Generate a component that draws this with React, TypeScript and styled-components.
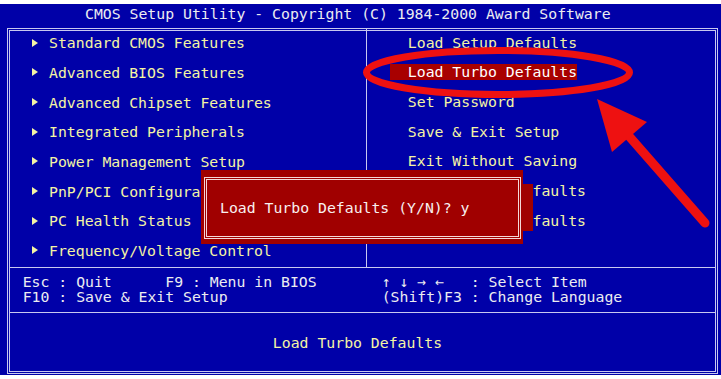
import styled, { createGlobalStyle } from 'styled-components';

const BIOS_BLUE = '#0000a8';
const LINE = '#c8c8f0';
const YELLOW = '#f4f4a4';
const WHITE = '#ececf0';
const DIALOG_RED = '#a00000';
const MARK_RED = '#ee1111';

const GlobalStyle = createGlobalStyle`
    html, body {
        margin: 0;
        padding: 0;
        background: #ffffff;
    }
    body {
        width: 721px;
        height: 379px;
        overflow: hidden;
    }
`;

const Page = styled.div`
    position: relative;
    width: 721px;
    height: 379px;
    box-sizing: border-box;
    padding-top: 4px;
    font-family: "DejaVu Sans Mono", "Liberation Mono", monospace;
    font-size: 14.8px;
`;

const Screen = styled.div`
    height: 371px;
    background: ${BIOS_BLUE};
    display: flex;
    flex-direction: column;
`;

const TitleBar = styled.div`
    height: 24px;
    line-height: 19px;
    padding-left: 85px;
    color: ${WHITE};
    white-space: pre;
`;

const Panel = styled.div`
    margin-left: 7px;
    width: 711px;
    height: 346px;
    box-sizing: border-box;
    border: 3px double ${LINE};
    display: flex;
    flex-direction: column;
`;

const MenuArea = styled.div`
    height: 236px;
    display: grid;
    grid-template-columns: 357px 1fr;
`;

const MenuColumn = styled.div<{ $divider?: boolean }>`
    display: grid;
    grid-auto-rows: 29.67px;
    align-content: start;
    margin-top: -3px;
    border-right: ${({ $divider }) => ($divider ? `1px solid ${LINE}` : 'none')};
`;

const LeftItem = styled.div`
    display: flex;
    align-items: center;
    gap: 11px;
    padding-left: 22px;
    color: ${YELLOW};
    white-space: pre;
`;

const Pointer = styled.span`
    width: 0;
    height: 0;
    border-left: 6px solid ${YELLOW};
    border-top: 4px solid transparent;
    border-bottom: 4px solid transparent;
`;

const RightItem = styled.div`
    display: flex;
    align-items: center;
    padding-left: 23px;
    white-space: pre;
`;

const ItemLabel = styled.span<{ $active?: boolean }>`
    display: inline-block;
    line-height: 16px;
    padding-left: 2ch;
    color: ${({ $active }) => ($active ? '#ffffff' : YELLOW)};
    background: ${({ $active }) => ($active ? '#a80000' : 'transparent')};
`;

const HelpArea = styled.div`
    height: 44px;
    border-top: 1px solid ${LINE};
    display: grid;
    grid-template-columns: 359px 1fr;
    align-content: center;
    padding-left: 12.7px;
    line-height: 14.3px;
    color: ${WHITE};
    white-space: pre;
`;

const HelpColumn = styled.div`
    display: flex;
    flex-direction: column;
    margin-top: -1px;
`;

const StatusArea = styled.div`
    flex: 1;
    border-top: 1px solid ${LINE};
    display: flex;
    align-items: center;
    justify-content: center;
    padding-right: 10px;
    color: ${YELLOW};
    white-space: pre;
`;

const Dialog = styled.div`
    position: absolute;
    left: 201px;
    top: 170px;
    width: 322px;
    height: 74px;
    box-sizing: border-box;
    padding: 7px 2px 5px 3px;
    background: ${DIALOG_RED};
`;

const DialogFrame = styled.div`
    height: 100%;
    box-sizing: border-box;
    border: 3px double #f4d8d8;
    display: flex;
    align-items: center;
    padding-left: 13px;
    padding-bottom: 1px;
    line-height: 17px;
    color: #f8f0f0;
    white-space: pre;
`;

const DialogShadow = styled.div`
    position: absolute;
    left: 523px;
    top: 184px;
    width: 10px;
    height: 47px;
    background: ${DIALOG_RED};
`;

const Marks = styled.svg`
    position: absolute;
    left: 0;
    top: 0;
    pointer-events: none;
`;

const leftItems = [
    'Standard CMOS Features',
    'Advanced BIOS Features',
    'Advanced Chipset Features',
    'Integrated Peripherals',
    'Power Management Setup',
    'PnP/PCI Configurations',
    'PC Health Status',
    'Frequency/Voltage Control',
];

const rightItems = [
    'Load Setup Defaults',
    'Load Turbo Defaults',
    'Set Password',
    'Save & Exit Setup',
    'Exit Without Saving',
    'Load Custom Defaults',
    'Save Custom Defaults',
];

const App = () => {
    return (
        <Page>
            <GlobalStyle />
            <Screen>
                <TitleBar>CMOS Setup Utility - Copyright (C) 1984-2000 Award Software</TitleBar>
                <Panel>
                    <MenuArea>
                        <MenuColumn $divider>
                            {leftItems.map((item) => (
                                <LeftItem key={item}>
                                    <Pointer />
                                    {item}
                                </LeftItem>
                            ))}
                        </MenuColumn>
                        <MenuColumn>
                            {rightItems.map((item, i) => (
                                <RightItem key={item}>
                                    <ItemLabel $active={i === 1}>{item}</ItemLabel>
                                </RightItem>
                            ))}
                        </MenuColumn>
                    </MenuArea>
                    <HelpArea>
                        <HelpColumn>
                            <span>Esc : Quit      F9 : Menu in BIOS</span>
                            <span>F10 : Save &amp; Exit Setup</span>
                        </HelpColumn>
                        <HelpColumn>
                            <span>↑ ↓ → ←   : Select Item</span>
                            <span>(Shift)F3 : Change Language</span>
                        </HelpColumn>
                    </HelpArea>
                    <StatusArea>Load Turbo Defaults</StatusArea>
                </Panel>
            </Screen>
            <DialogShadow />
            <Dialog>
                <DialogFrame>Load Turbo Defaults (Y/N)? y</DialogFrame>
            </Dialog>
            <Marks width="721" height="379" viewBox="0 0 721 379">
                <ellipse cx="498" cy="72.5" rx="131.5" ry="22" fill="none" stroke={MARK_RED} strokeWidth="7" />
                <line x1="628" y1="135" x2="705" y2="223" stroke={MARK_RED} strokeWidth="9" strokeLinecap="round" />
                <polygon points="597,99 612,152 647,122" fill={MARK_RED} />
            </Marks>
        </Page>
    );
};

export default App;
